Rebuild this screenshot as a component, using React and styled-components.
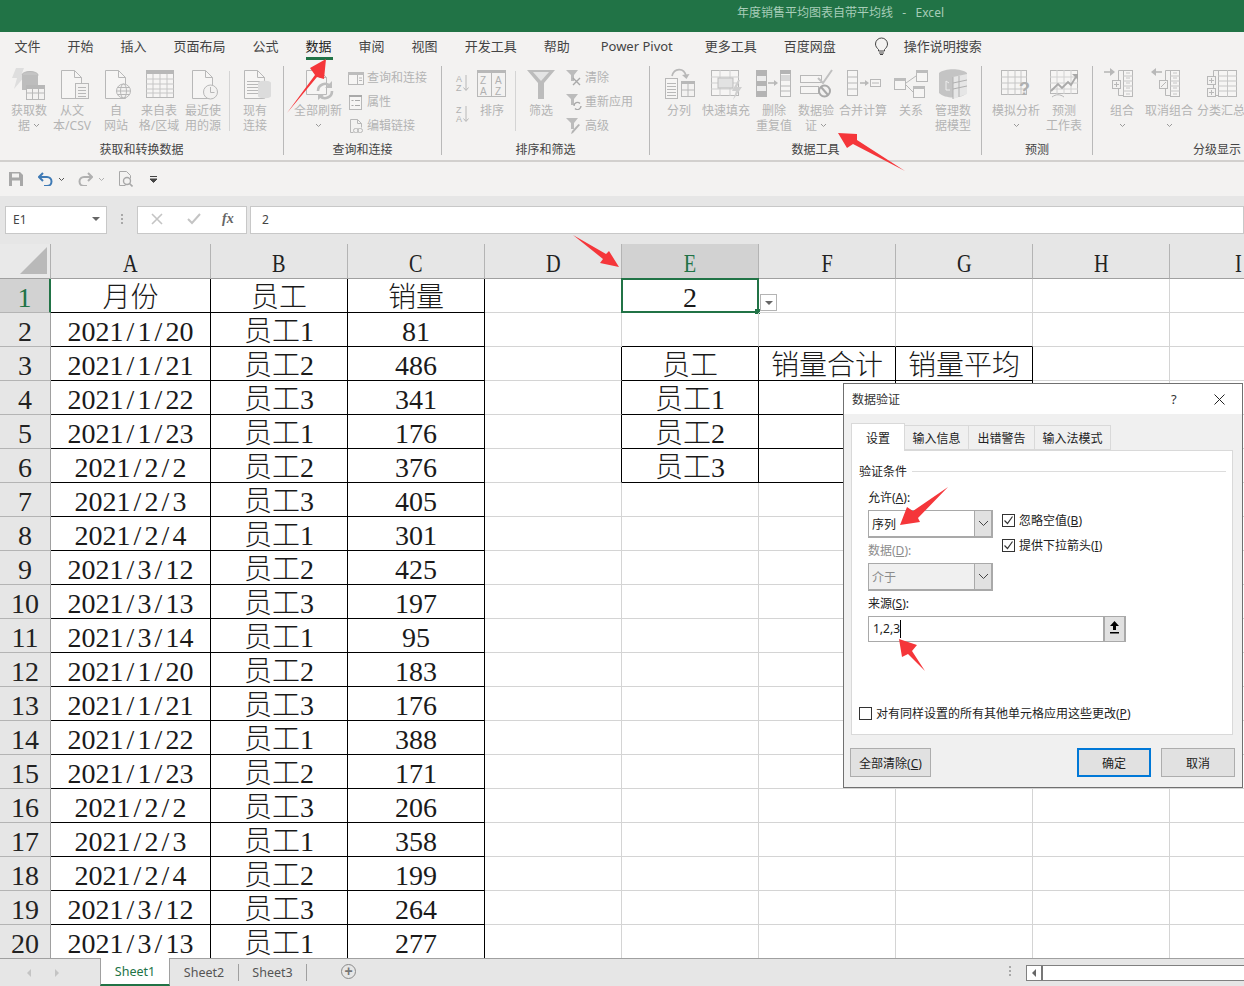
import React from "react";
import styled, { createGlobalStyle } from "styled-components";

const GREEN = "#217346";
const UI_FONT = '"Noto Sans", "Noto Sans CJK SC", sans-serif';
const CELL_FONT = '"Liberation Serif", "Noto Sans CJK SC", serif';

const GlobalStyle = createGlobalStyle`
  html, body { margin: 0; padding: 0; background: #fff; }
  * { box-sizing: border-box; }
`;

const Page = styled.div`
  position: relative;
  width: 1244px;
  height: 986px;
  overflow: hidden;
  font-family: ${UI_FONT};
  font-size: 12px;
  display: flex;
  flex-direction: column;
`;

const TitleBar = styled.div`
  height: 32px;
  flex: none;
  background: ${GREEN};
  color: #a7cdb8;
  font-size: 12px;
  padding-left: 737px;
  line-height: 26px;
  white-space: pre;
`;

const TabRow = styled.div`
  height: 28px;
  flex: none;
  background: #f3f2f1;
  display: flex;
  gap: 27px;
  padding-left: 14.5px;
  color: #444;
  font-size: 13px;
`;

const TabItem = styled.div`
  position: relative;
  line-height: 28px;
  white-space: nowrap;
  color: ${(p) => (p.$active ? "#222" : "#444")};
  margin-left: ${(p) => p.$ml || 0}px;
  &::after {
    content: "";
    display: ${(p) => (p.$active ? "block" : "none")};
    position: absolute;
    left: 0;
    right: -1px;
    bottom: 0;
    height: 3px;
    background: ${GREEN};
  }
`;

const Search = styled.div`
  display: flex;
  align-items: center;
  gap: 15px;
  margin-left: 11px;
  line-height: 28px;
  white-space: nowrap;
`;

const Ribbon = styled.div`
  height: 102px;
  flex: none;
  background: #f3f2f1;
  border-bottom: 2px solid #d2d0ce;
  display: flex;
  padding-bottom: 5px;
`;

const Group = styled.div`
  flex: none;
  width: ${(p) => p.$w}px;
  position: relative;
  display: flex;
  flex-direction: column;
  margin-top: 6px;
  border-right: ${(p) => (p.$last ? "none" : "1px solid #b9b9b9")};
`;

const GroupBody = styled.div`
  flex: 1;
  display: flex;
  align-items: flex-start;
  padding-left: ${(p) => p.$pl || 0}px;
`;

const GroupLabel = styled.div`
  height: 17px;
  line-height: 17px;
  margin-bottom: -3px;
  position: relative;
  text-align: center;
  color: #444;
  white-space: nowrap;
`;

const BigButton = styled.div`
  flex: none;
  width: ${(p) => p.$w}px;
  display: flex;
  flex-direction: column;
  align-items: center;
  color: #b4b4b4;
  line-height: 15px;
  white-space: nowrap;
  & > svg { margin-bottom: 3px; }
`;

const TextLine = styled.div`
  height: 15px;
  display: flex;
  align-items: center;
  gap: 3px;
`;

const InnerSep = styled.div`
  flex: none;
  width: 1px;
  height: 60px;
  margin: 5px ${(p) => p.$mr || 0}px 0 ${(p) => p.$ml || 0}px;
  background: #d4d4d4;
`;

const SmallColumn = styled.div`
  flex: none;
  display: flex;
  flex-direction: column;
  gap: 8px;
  padding-top: 4px;
  margin-left: ${(p) => p.$ml || 0}px;
`;

const SmallItem = styled.div`
  height: 16px;
  display: flex;
  align-items: center;
  gap: 3px;
  color: #b4b4b4;
  line-height: 16px;
  white-space: nowrap;
`;

const SortColumn = styled.div`
  flex: none;
  width: 18px;
  display: flex;
  flex-direction: column;
  gap: 7px;
  padding-top: 5px;
  margin-left: 0;
`;

const RibbonIcon = styled.svg`
  flex: none;
  fill: none;
  stroke: #b8b8b8;
  stroke-width: 1;
  display: block;
  text { stroke: none; fill: #b0b0b0; font-family: "Liberation Sans", sans-serif; font-weight: 400; }
`;

const Big = ({ children }) => (
  <RibbonIcon width="36" height="34" viewBox="0 0 36 34">
    {children}
  </RibbonIcon>
);
const Small = ({ children }) => (
  <RibbonIcon width="16" height="16" viewBox="0 0 16 16">
    {children}
  </RibbonIcon>
);
const Chevron = () => (
  <RibbonIcon width="7" height="5" viewBox="0 0 7 5">
    <path d="M1 1l2.5 2.5L6 1" stroke="#9a9a9a" />
  </RibbonIcon>
);

const Doc = () => (
  <>
    <path d="M7.5 4.5h13l7 7v21h-20z" fill="#f6f5f4" />
    <path d="M20.5 4.5v7h7" />
  </>
);

const Lines = ({ x, y, w, n, gap = 3 }) => (
  <path d={Array.from({ length: n }, (_, i) => `M${x} ${y + i * gap + 0.5}h${w}`).join("")} />
);

const icons = {
  getData: (
    <Big>
      <path d="M5 2h8l-3 8h4L3 23l3-11H1z" fill="#dedede" stroke="none" />
      <ellipse cx="19" cy="9" rx="8" ry="3.5" fill="#c4c4c4" />
      <path d="M11 9v15h16V9" fill="#bdbdbd" stroke="none" />
      <rect x="15.5" y="19.5" width="18" height="14" fill="#f3f2f1" />
      <rect x="15.5" y="19.5" width="18" height="3" fill="#b8b8b8" />
      <path d="M15 27h18M21.5 22v11M27.5 22v11" />
    </Big>
  ),
  text: (
    <Big>
      <Doc />
      <rect x="21.5" y="17.5" width="13" height="15" fill="#f3f2f1" />
      <Lines x={24} y={21} w={8} n={4} />
    </Big>
  ),
  web: (
    <Big>
      <Doc />
      <circle cx="25.5" cy="25" r="7" fill="#f3f2f1" />
      <ellipse cx="25.5" cy="25" rx="3" ry="7" />
      <path d="M18.5 25h14M19.5 21.5h12M19.5 28.5h12" />
    </Big>
  ),
  table: (
    <Big>
      <rect x="5.5" y="4.5" width="27" height="27" fill="#f6f5f4" />
      <rect x="5" y="4" width="28" height="4" fill="#b8b8b8" stroke="none" />
      <path d="M5 13h28M5 18h28M5 23h28M5 27h28M12 8v23M19 8v23M26 8v23" stroke="#c6c6c6" />
    </Big>
  ),
  recent: (
    <Big>
      <Doc />
      <circle cx="25.5" cy="26" r="7" fill="#f3f2f1" />
      <path d="M25.5 21v5.5h4" />
    </Big>
  ),
  existing: (
    <Big>
      <Doc />
      <Lines x={10} y={15} w={13} n={5} />
      <path d="M21 17c0-3 13-3 13 0v13c0 3-13 3-13 0z" fill="#dcdcdc" stroke="none" />
    </Big>
  ),
  refresh: (
    <Big>
      <path d="M6.5 4.5h13l7 7v17h-20z" fill="#f6f5f4" />
      <path d="M19.5 4.5v7h7" />
      <path d="M18 25a7 7 0 0 1 12-5M32 25a7 7 0 0 1-12 5" stroke="#bdbdbd" strokeWidth="2.6" />
      <path d="M32 15v7h-7zM18 34v-6h7z" fill="#bdbdbd" stroke="none" />
    </Big>
  ),
  query: (
    <Small>
      <rect x="0.5" y="2.5" width="15" height="12" fill="#f6f5f4" />
      <rect x="0" y="2" width="16" height="3" fill="#bdbdbd" stroke="none" />
      <path d="M9.5 5v9M11 8h3M11 10.5h3" />
    </Small>
  ),
  props: (
    <Small>
      <rect x="1.5" y="1.5" width="12" height="14" fill="#f6f5f4" />
      <rect x="1" y="1" width="13" height="2" fill="#a9a9a9" stroke="none" />
      <path d="M3.5 6.5h2M7 6.5h5M3.5 11.5h2M7 11.5h5" stroke="#a9a9a9" />
    </Small>
  ),
  links: (
    <Small>
      <path d="M2.5 1.5h7l4 4v4M2.5 1.5v13h3" />
      <path d="M9.5 1.5v4h4" />
      <rect x="5.5" y="10.5" width="5" height="4" rx="2" />
      <rect x="9.5" y="10.5" width="5" height="4" rx="2" />
    </Small>
  ),
  sortAZ: (
    <RibbonIcon width="18" height="24" viewBox="0 0 18 24">
      <text x="3" y="11" fontSize="9">A</text>
      <text x="3" y="20" fontSize="9">Z</text>
      <path d="M13 4v15M10.5 16.5l2.5 3 2.5-3" />
    </RibbonIcon>
  ),
  sortZA: (
    <RibbonIcon width="18" height="24" viewBox="0 0 18 24">
      <text x="3" y="11" fontSize="9">Z</text>
      <text x="3" y="20" fontSize="9">A</text>
      <path d="M13 4v15M10.5 16.5l2.5 3 2.5-3" />
    </RibbonIcon>
  ),
  sort: (
    <Big>
      <rect x="3.5" y="5.5" width="28" height="25" />
      <rect x="3" y="4" width="29" height="3" fill="#b8b8b8" stroke="none" />
      <path d="M17.5 7v24" />
      <text x="6" y="18" fontSize="10">Z</text>
      <text x="21" y="18" fontSize="10">A</text>
      <text x="6" y="29" fontSize="10">A</text>
      <text x="21" y="29" fontSize="10">Z</text>
    </Big>
  ),
  filter: (
    <Big>
      <path d="M4 4h28L21 17v16h-6V17z" fill="#bcbcbc" stroke="none" />
      <path d="M10 6h16l-8 9z" fill="#e4e4e4" stroke="none" />
    </Big>
  ),
  clear: (
    <Small>
      <path d="M0 0h12L8 5v6H5V5z" fill="#bcbcbc" stroke="none" />
      <path d="M7 8l7 7M14 8l-7 7" stroke="#a9a9a9" strokeWidth="1.4" />
    </Small>
  ),
  reapply: (
    <Small>
      <path d="M0 0h12L8 5v6H5V5z" fill="#bcbcbc" stroke="none" />
      <path d="M8 12a3.5 3.5 0 0 1 6-2.5M15 12a3.5 3.5 0 0 1-6 2.5" stroke="#a9a9a9" strokeWidth="1.4" />
    </Small>
  ),
  advanced: (
    <Small>
      <path d="M0 0h12L8 5v6H5V5z" fill="#bcbcbc" stroke="none" />
      <path d="M14 7l-7 8-2 1 1-3 6.5-7z" fill="#b4b4b4" stroke="none" />
    </Small>
  ),
  split: (
    <Big>
      <rect x="4.5" y="12.5" width="12" height="20" fill="#f6f5f4" />
      <Lines x={6} y={17} w={9} n={5} />
      <path d="M11 10C13 2 23 1 25 10" strokeWidth="1.6" />
      <path d="M21 9l4.5 4 3-5z" fill="#b8b8b8" stroke="none" />
      <rect x="20.5" y="15.5" width="13" height="15" fill="#f3f2f1" />
      <rect x="20" y="15" width="14" height="3" fill="#b8b8b8" stroke="none" />
      <path d="M27 18v12M20 24h14" />
    </Big>
  ),
  flash: (
    <Big>
      <rect x="3.5" y="4.5" width="27" height="25" fill="#f6f5f4" />
      <path d="M3 11h28M3 17h28M3 23h28M12 4v26M22 4v26" stroke="#cfcfcf" />
      <rect x="10" y="12" width="15" height="10" fill="#e2e2e2" stroke="#bdbdbd" />
      <path d="M30 14l-6 11h4l-3 9 9-13h-5l3-7z" fill="#cfcfcf" stroke="none" />
    </Big>
  ),
  dedupe: (
    <Big>
      <rect x="0" y="4" width="11" height="27" fill="#b4b4b4" stroke="none" />
      <rect x="1" y="10" width="9" height="5" fill="#ececec" stroke="none" />
      <rect x="1" y="20" width="9" height="5" fill="#ececec" stroke="none" />
      <path d="M12 17h8" strokeWidth="1.6" />
      <path d="M18 14l4 3-4 3z" fill="#b8b8b8" stroke="none" />
      <rect x="24.5" y="4.5" width="10" height="26" fill="#f6f5f4" />
      <rect x="24" y="4" width="11" height="4" fill="#b4b4b4" stroke="none" />
      <path d="M24 14h11M24 20h11M24 25h11" />
      <rect x="25" y="9" width="9" height="5" fill="#d8d8d8" stroke="none" />
    </Big>
  ),
  validate: (
    <Big>
      <rect x="2.5" y="9.5" width="21" height="7" fill="#f6f5f4" />
      <rect x="2.5" y="20.5" width="18" height="7" fill="#f6f5f4" />
      <path d="M20 12l5 5 9-13" strokeWidth="2" stroke="#c0c0c0" />
      <circle cx="26.5" cy="25" r="5.5" fill="#f3f2f1" strokeWidth="2" stroke="#a9a9a9" />
      <path d="M23 21l7 8" strokeWidth="2" stroke="#a9a9a9" />
    </Big>
  ),
  consolidate: (
    <Big>
      <rect x="2.5" y="4.5" width="10" height="25" fill="#f6f5f4" />
      <path d="M2 11h11M2 17h11M2 23h11" />
      <path d="M15 17h7" strokeWidth="1.6" />
      <path d="M20 14l4 3-4 3z" fill="#b8b8b8" stroke="none" />
      <rect x="25.5" y="13.5" width="10" height="7" fill="#f6f5f4" />
      <path d="M27 17h7" />
    </Big>
  ),
  relation: (
    <Big>
      <rect x="1.5" y="12.5" width="11" height="11" fill="#f6f5f4" />
      <rect x="23.5" y="4.5" width="11" height="11" fill="#f6f5f4" />
      <rect x="20.5" y="20.5" width="11" height="11" fill="#f6f5f4" />
      <rect x="1" y="12" width="12" height="3" fill="#bdbdbd" stroke="none" />
      <rect x="23" y="4" width="12" height="3" fill="#bdbdbd" stroke="none" />
      <rect x="20" y="20" width="12" height="3" fill="#bdbdbd" stroke="none" />
      <path d="M13 17l10-7M13 19l7 7" />
    </Big>
  ),
  model: (
    <Big>
      <path d="M4 7c6-5 22-5 28 0v20c-6 6-22 6-28 0z" fill="#c4c4c4" stroke="none" />
      <path d="M18 11l14-3v20l-14 5z" fill="#e6e6e6" stroke="none" />
      <path d="M18 11v22M24 10v21M18 17l14-3M18 23l14-3" stroke="#b0b0b0" />
      <path d="M11 15v9h4M11 15l3 2" stroke="#ededed" />
    </Big>
  ),
  whatIf: (
    <Big>
      <rect x="3.5" y="4.5" width="25" height="24" fill="#f6f5f4" />
      <path d="M3 11h26M3 17h26M3 23h26M10 4v25M17 4v25M23 4v25" stroke="#c6c6c6" />
      <text x="21" y="29" fontSize="18" style={{ fontWeight: 700 }}>?</text>
    </Big>
  ),
  forecast: (
    <Big>
      <rect x="4.5" y="4.5" width="27" height="23" fill="#f6f5f4" />
      <path d="M4 11h28M4 17h28M4 23h28M11 4v24M18 4v24M25 4v24" stroke="#d2d2d2" />
      <path d="M5 25l7-7 4 4 6-6 3 3 6-10" strokeWidth="1.8" stroke="#a9a9a9" />
      <path d="M26 8h6v6z" fill="#a9a9a9" stroke="none" />
      <path d="M6 31c4-3 8-3 12 0" />
    </Big>
  ),
  group: (
    <Big>
      <path d="M0 6h8" strokeWidth="1.6" />
      <path d="M6 2l5 4-5 4z" fill="#b8b8b8" stroke="none" />
      <path d="M19.5 4.5h-5v25h5" />
      <rect x="19.5" y="4.5" width="9" height="26" fill="#f6f5f4" />
      <path d="M19 10h10M19 15h10M19 20h10M19 25h10M22 7h4M22 12h4M22 17h4M22 22h4M22 28h4" stroke="#c6c6c6" />
      <rect x="8.5" y="14.5" width="8" height="8" fill="#f3f2f1" />
      <path d="M12.5 16v5M10 18.5h5" />
    </Big>
  ),
  ungroup: (
    <Big>
      <path d="M3 6h8" strokeWidth="1.6" />
      <path d="M5 2L0 6l5 4z" fill="#b8b8b8" stroke="none" />
      <path d="M19.5 4.5h-5v25h5" />
      <rect x="19.5" y="4.5" width="9" height="26" fill="#f6f5f4" />
      <path d="M19 10h10M19 15h10M19 20h10M19 25h10M22 7h4M22 12h4M22 17h4M22 22h4M22 28h4" stroke="#c6c6c6" />
      <rect x="8.5" y="14.5" width="8" height="8" fill="#f3f2f1" />
      <path d="M10 21l5-5" />
    </Big>
  ),
  subtotal: (
    <Big>
      <path d="M15.5 4.5h-5v25h5" />
      <rect x="15.5" y="4.5" width="18" height="26" fill="#f6f5f4" />
      <path d="M15 10h19M15 15h19M15 20h19M15 25h19M24.5 4v27" stroke="#c6c6c6" />
      <rect x="4.5" y="10.5" width="8" height="8" fill="#f3f2f1" />
      <path d="M8.5 12v5M6 14.5h5" />
      <rect x="4.5" y="22.5" width="8" height="8" fill="#f3f2f1" />
      <path d="M8.5 24v5M6 26.5h5" />
    </Big>
  ),
};

const Btn = ({ w, icon, lines, chevron }) => (
  <BigButton $w={w}>
    {icons[icon]}
    {lines.map((t, i) => (
      <TextLine key={i}>
        {t}
        {chevron && lines.length > 1 && i === lines.length - 1 && <Chevron />}
      </TextLine>
    ))}
    {chevron && lines.length === 1 && (
      <TextLine>
        <Chevron />
      </TextLine>
    )}
  </BigButton>
);

const Item = ({ icon, text }) => (
  <SmallItem>
    {icons[icon]}
    {text}
  </SmallItem>
);

const RibbonBar = () => (
  <Ribbon>
    <Group $w={284}>
      <GroupBody $pl={5}>
        <Btn w={48} icon="getData" lines={["获取数", "据"]} chevron />
        <Btn w={38} icon="text" lines={["从文", "本/CSV"]} />
        <Btn w={50} icon="web" lines={["自", "网站"]} />
        <Btn w={36} icon="table" lines={["来自表", "格/区域"]} />
        <Btn w={52} icon="recent" lines={["最近使", "用的源"]} />
        <InnerSep />
        <Btn w={50} icon="existing" lines={["现有", "连接"]} />
      </GroupBody>
      <GroupLabel>获取和转换数据</GroupLabel>
    </Group>
    <Group $w={158}>
      <GroupBody $pl={8}>
        <Btn w={52} icon="refresh" lines={["全部刷新"]} chevron />
        <SmallColumn $ml={4}>
          <Item icon="query" text="查询和连接" />
          <Item icon="props" text="属性" />
          <Item icon="links" text="编辑链接" />
        </SmallColumn>
      </GroupBody>
      <GroupLabel>查询和连接</GroupLabel>
    </Group>
    <Group $w={208}>
      <GroupBody $pl={11}>
        <SortColumn>
          {icons.sortAZ}
          {icons.sortZA}
        </SortColumn>
        <Btn w={42} icon="sort" lines={["排序"]} />
        <InnerSep $ml={2} $mr={4} />
        <Btn w={42} icon="filter" lines={["筛选"]} />
        <SmallColumn $ml={4}>
          <Item icon="clear" text="清除" />
          <Item icon="reapply" text="重新应用" />
          <Item icon="advanced" text="高级" />
        </SmallColumn>
      </GroupBody>
      <GroupLabel>排序和筛选</GroupLabel>
    </Group>
    <Group $w={332}>
      <GroupBody $pl={10}>
        <Btn w={38} icon="split" lines={["分列"]} />
        <Btn w={56} icon="flash" lines={["快速填充"]} />
        <Btn w={40} icon="dedupe" lines={["删除", "重复值"]} />
        <Btn w={44} icon="validate" lines={["数据验", "证"]} chevron />
        <Btn w={50} icon="consolidate" lines={["合并计算"]} />
        <Btn w={46} icon="relation" lines={["关系"]} />
        <Btn w={38} icon="model" lines={["管理数", "据模型"]} />
      </GroupBody>
      <GroupLabel>数据工具</GroupLabel>
    </Group>
    <Group $w={111}>
      <GroupBody $pl={8}>
        <Btn w={52} icon="whatIf" lines={["模拟分析"]} chevron />
        <Btn w={44} icon="forecast" lines={["预测", "工作表"]} />
      </GroupBody>
      <GroupLabel>预测</GroupLabel>
    </Group>
    <Group $w={248} $last>
      <GroupBody $pl={7}>
        <Btn w={44} icon="group" lines={["组合"]} chevron />
        <Btn w={50} icon="ungroup" lines={["取消组合"]} chevron />
        <Btn w={54} icon="subtotal" lines={["分类汇总"]} />
      </GroupBody>
      <GroupLabel>分级显示</GroupLabel>
    </Group>
  </Ribbon>
);

const QuickBar = styled.div`
  height: 34px;
  flex: none;
  background: #f3f2f1;
  display: flex;
  align-items: center;
  padding-left: 9px;
`;

const QuickIcon = styled.svg`
  flex: none;
  fill: none;
  margin-left: ${(p) => p.$ml || 0}px;
`;

const FormulaArea = styled.div`
  height: 48px;
  flex: none;
  background: #e6e6e6;
  display: flex;
  padding: 10px 0 10px 5px;
`;

const FieldBox = styled.div`
  height: 28px;
  background: #fff;
  border: 1px solid #c8c8c8;
  flex: ${(p) => (p.$grow ? 1 : "none")};
  width: ${(p) => (p.$w ? `${p.$w}px` : "auto")};
  display: flex;
  align-items: center;
  color: #444;
  font-size: 12px;
  padding-left: ${(p) => p.$pl || 0}px;
  padding-bottom: 2px;
  margin-left: ${(p) => p.$ml || 0}px;
  position: relative;
`;

const NameArrow = styled.span`
  margin-left: auto;
  margin-right: 6px;
  width: 0;
  height: 0;
  border-left: 4px solid transparent;
  border-right: 4px solid transparent;
  border-top: 4px solid #666;
`;

const Grip = styled.div`
  flex: none;
  width: 2px;
  height: 12px;
  margin: 8px 0 0 14px;
  background: repeating-linear-gradient(#a8a8a8 0 2px, transparent 2px 4px);
`;

const FxLabel = styled.span`
  font-family: "Liberation Serif", serif;
  font-style: italic;
  font-weight: 700;
  font-size: 14px;
  color: #666;
  margin-left: 21px;
`;

const Sheet = styled.div`
  height: 714px;
  flex: none;
  overflow: hidden;
  display: grid;
  grid-template-columns: 51px 160px repeat(8, 137px);
  grid-auto-rows: 34px;
  grid-template-rows: 35px;
  background: #fff;
`;

const Corner = styled.div`
  background: #e9e9e9;
  border-right: 1px solid #b0b0b0;
  border-bottom: 1px solid #a0a0a0;
  display: flex;
  align-items: center;
  justify-content: flex-end;
  padding-right: 2px;
`;

const ColHead = styled.div`
  background: ${(p) => (p.$selected ? "#d2d2d2" : "#e6e6e6")};
  color: ${(p) => (p.$selected ? GREEN : "#222")};
  border-right: 1px solid #b4b4b4;
  border-bottom: 1px solid #a0a0a0;
  font-family: ${CELL_FONT};
  font-size: 26px;
  line-height: 30px;
  padding-top: 5px;
  display: flex;
  align-items: center;
  justify-content: center;
  span { display: block; transform: scaleX(0.78); }
`;

const RowHead = styled.div`
  background: ${(p) => (p.$selected ? "#d2d2d2" : "#e6e6e6")};
  color: ${(p) => (p.$selected ? GREEN : "#222")};
  border-right: ${(p) => (p.$selected ? `2px solid ${GREEN}` : "1px solid #a0a0a0")};
  border-bottom: 1px solid #b4b4b4;
  font-family: ${CELL_FONT};
  font-size: 28px;
  line-height: 30px;
  padding-top: 5px;
  display: flex;
  align-items: center;
  justify-content: center;
`;

const Cell = styled.div`
  position: relative;
  border-right: 1px solid ${(p) => (p.$blackRight ? "#000" : "#d4d4d4")};
  border-bottom: 1px solid ${(p) => (p.$blackBottom ? "#000" : "#d4d4d4")};
  font-family: ${CELL_FONT};
  font-size: 28px;
  font-weight: 300;
  line-height: 30px;
  padding-top: 5px;
  color: #1a1a1a;
  display: flex;
  align-items: center;
  justify-content: center;
  white-space: nowrap;
`;

const CellText = styled.span`
  display: block;
  line-height: 30px;
  height: 30px;
`;

const Slash = styled.span`
  display: inline-block;
  width: 14px;
  text-align: center;
`;

const Selection = styled.div`
  position: absolute;
  left: -1px;
  top: -1px;
  right: -1px;
  bottom: -1px;
  border: 2px solid ${GREEN};
`;

const FillHandle = styled.div`
  position: absolute;
  right: -2px;
  bottom: -2px;
  width: 5px;
  height: 5px;
  background: ${GREEN};
`;

const CellDrop = styled.div`
  position: absolute;
  left: 138px;
  top: 15px;
  width: 17px;
  height: 17px;
  background: #fff;
  border: 1px solid #b4b4b4;
  display: flex;
  align-items: center;
  justify-content: center;
  &::after {
    content: "";
    border-left: 4px solid transparent;
    border-right: 4px solid transparent;
    border-top: 4px solid #666;
  }
`;

const TabBar = styled.div`
  height: 28px;
  flex: none;
  background: #e6e6e6;
  border-top: 1px solid #a0a0a0;
  display: flex;
  align-items: stretch;
  color: #555;
  font-size: 12.5px;
`;

const Nav = styled.div`
  flex: none;
  width: 100px;
  display: flex;
  align-items: center;
  gap: 24px;
  padding-left: 27px;
`;

const NavArrow = styled.span`
  border-top: 4px solid transparent;
  border-bottom: 4px solid transparent;
  ${(p) => (p.$left ? "border-right" : "border-left")}: 4px solid #c4c4c4;
`;

const SheetTab = styled.div`
  flex: none;
  width: ${(p) => p.$w}px;
  display: flex;
  align-items: center;
  justify-content: center;
  ${(p) =>
    p.$active
      ? `background:#fff;color:${GREEN};border-left:1px solid #a0a0a0;border-right:1px solid #a0a0a0;border-bottom:2px solid ${GREEN};margin-top:-1px;`
      : "margin:5px 0 5px;border-right:1px solid #a0a0a0;"}
`;

const AddSheet = styled.div`
  flex: none;
  width: 15px;
  height: 15px;
  margin: 5px 0 0 34px;
  border: 1px solid #8a8a8a;
  border-radius: 50%;
  color: #777;
  display: flex;
  align-items: center;
  justify-content: center;
  &::before {
    content: "+";
    font-family: "Liberation Sans", sans-serif;
    font-size: 14px;
    font-weight: 700;
    line-height: 13px;
  }
`;

const StatusDots = styled.div`
  flex: none;
  width: 2px;
  height: 12px;
  margin: 7px 0 0 653px;
  background: repeating-linear-gradient(#a8a8a8 0 2px, transparent 2px 4px);
`;

const HScroll = styled.div`
  flex: none;
  width: 230px;
  height: 16px;
  margin: 6px 0 0 15px;
  background: #fff;
  border: 1px solid #808080;
  border-right: none;
  display: flex;
  align-items: center;
`;

const HScrollBtn = styled.div`
  width: 16px;
  height: 100%;
  border-right: 2px solid #777;
  display: flex;
  align-items: center;
  justify-content: center;
  &::after {
    content: "";
    border-top: 4px solid transparent;
    border-bottom: 4px solid transparent;
    border-right: 4px solid #666;
  }
`;

/* dialog */
const Dialog = styled.div`
  position: absolute;
  left: 843px;
  top: 383px;
  width: 400px;
  height: 405px;
  background: #f0f0f0;
  border: 1px solid #707070;
  display: flex;
  flex-direction: column;
  color: #222;
  font-size: 12px;
`;

const DialogTitle = styled.div`
  height: 30px;
  flex: none;
  background: #fff;
  display: flex;
  align-items: center;
  padding-left: 8px;
  color: #333;
`;

const TitleBtn = styled.div`
  margin-left: ${(p) => p.$ml}px;
  font-size: 13px;
  display: flex;
`;

const DialogTabs = styled.div`
  display: flex;
  align-items: flex-end;
  height: 27px;
  margin: 9px 0 0 7px;
  flex: none;
`;

const DialogTab = styled.div`
  width: ${(p) => p.$w}px;
  height: ${(p) => (p.$active ? 28 : 25)}px;
  margin-bottom: ${(p) => (p.$active ? -1 : 0)}px;
  background: ${(p) => (p.$active ? "#fff" : "#f0f0f0")};
  border: 1px solid #d9d9d9;
  border-left: ${(p) => (p.$active ? "1px solid #d9d9d9" : "none")};
  border-bottom: ${(p) => (p.$active ? "none" : "1px solid #d9d9d9")};
  display: flex;
  align-items: center;
  justify-content: center;
  position: relative;
  z-index: ${(p) => (p.$active ? 1 : 0)};
`;

const TabPanel = styled.div`
  height: 285px;
  flex: none;
  margin: 0 9px 0 7px;
  background: #fff;
  border: 1px solid #d9d9d9;
  display: flex;
  flex-direction: column;
  padding: 11px 6px 14px 7px;
`;

const Legend = styled.div`
  height: 18px;
  flex: none;
  display: flex;
  align-items: center;
  gap: 5px;
  margin-bottom: 5px;
  &::after {
    content: "";
    flex: 1;
    height: 1px;
    background: #dcdcdc;
  }
`;

const FieldRow = styled.div`
  display: flex;
  padding-left: 9px;
`;

const FieldColumn = styled.div`
  flex: none;
  width: 125px;
`;

const CheckColumn = styled.div`
  margin: 28px 0 0 9px;
  display: flex;
  flex-direction: column;
  gap: 11px;
`;

const FieldLabel = styled.div`
  height: 18px;
  line-height: 20px;
  margin: 3px 0 4px;
  color: ${(p) => (p.$disabled ? "#8c8c8c" : "#222")};
  white-space: nowrap;
`;

const Combo = styled.div`
  height: 28px;
  display: flex;
  background: ${(p) => (p.$disabled ? "#f0f0f0" : "#fff")};
  border: 1px solid #a9a9a9;
  border-bottom-width: 2px;
  border-right-width: 2px;
  color: ${(p) => (p.$disabled ? "#8c8c8c" : "#222")};
  align-items: center;
  padding-left: 3px;
`;

const ComboBtn = styled.div`
  margin-left: auto;
  width: 17px;
  height: 100%;
  background: #e1e1e1;
  border-left: 1px solid #a9a9a9;
  display: flex;
  align-items: center;
  justify-content: center;
`;

const SourceInput = styled.div`
  width: 258px;
  margin-left: 9px;
  height: 26px;
  display: flex;
  align-items: center;
  background: #fff;
  border: 1px solid #a9a9a9;
  border-right-width: 2px;
  padding-left: 4px;
`;

const SourceText = styled.span`
  position: relative;
  top: -1px;
`;

const Caret = styled.span`
  width: 1px;
  height: 18px;
  background: #000;
`;

const RefBtn = styled.div`
  margin-left: auto;
  width: 21px;
  height: 100%;
  background: #e1e1e1;
  border-left: 2px solid #a9a9a9;
  display: flex;
  align-items: flex-start;
  justify-content: center;
  padding-top: 3px;
`;

const CheckRow = styled.div`
  display: flex;
  align-items: center;
  gap: 4px;
  height: 14px;
  white-space: nowrap;
  margin-top: ${(p) => (p.$bottom ? "auto" : 0)};
`;

const CheckBox = styled.span`
  flex: none;
  width: 13px;
  height: 13px;
  background: #fff;
  border: 1px solid #333;
  display: flex;
  align-items: center;
  justify-content: center;
`;

const DialogFooter = styled.div`
  display: flex;
  margin: 13px 7px 0 6px;
`;

const DialogBtn = styled.div`
  flex: none;
  width: ${(p) => p.$w}px;
  height: 29px;
  margin-left: ${(p) => p.$ml || 0}px;
  background: #e1e1e1;
  border: ${(p) => (p.$primary ? "2px solid #0078d7" : "1px solid #adadad")};
  display: flex;
  align-items: center;
  justify-content: center;
`;

const Annotations = styled.svg`
  position: absolute;
  left: 0;
  top: 0;
  pointer-events: none;
`;

const rows = [
  ["2021/1/20", "员工1", 81],
  ["2021/1/21", "员工2", 486],
  ["2021/1/22", "员工3", 341],
  ["2021/1/23", "员工1", 176],
  ["2021/2/2", "员工2", 376],
  ["2021/2/3", "员工3", 405],
  ["2021/2/4", "员工1", 301],
  ["2021/3/12", "员工2", 425],
  ["2021/3/13", "员工3", 197],
  ["2021/3/14", "员工1", 95],
  ["2021/1/20", "员工2", 183],
  ["2021/1/21", "员工3", 176],
  ["2021/1/22", "员工1", 388],
  ["2021/1/23", "员工2", 171],
  ["2021/2/2", "员工3", 206],
  ["2021/2/3", "员工1", 358],
  ["2021/2/4", "员工2", 199],
  ["2021/3/12", "员工3", 264],
  ["2021/3/13", "员工1", 277],
];

const COLS = ["A", "B", "C", "D", "E", "F", "G", "H", "I"];

const sideTable = {
  "3-4": "员工",
  "3-5": "销量合计",
  "3-6": "销量平均",
  "4-4": "员工1",
  "5-4": "员工2",
  "6-4": "员工3",
};

const cellValue = (r, c) => {
  if (r === 1) return ["月份", "员工", "销量", null, "2"][c] ?? null;
  if (c <= 2) return rows[r - 2][c];
  return sideTable[`${r}-${c}`] ?? null;
};

const DateText = ({ value }) =>
  value.split("/").map((part, i) => (
    <React.Fragment key={i}>
      {i > 0 && <Slash>/</Slash>}
      {part}
    </React.Fragment>
  ));

const inSide = (r, c) => r >= 3 && r <= 6 && c >= 4 && c <= 6;

const SheetGrid = () => (
  <Sheet>
    <Corner>
      <svg width="28" height="28" viewBox="0 0 28 28">
        <path d="M27 0v27H0z" fill="#b9b9b9" />
      </svg>
    </Corner>
    {COLS.map((name) => (
      <ColHead key={name} $selected={name === "E"}>
        <span>{name}</span>
      </ColHead>
    ))}
    {Array.from({ length: 20 }, (_, i) => i + 1).map((r) => (
      <React.Fragment key={r}>
        <RowHead $selected={r === 1}>{r}</RowHead>
        {COLS.map((name, c) => {
          const value = cellValue(r, c);
          return (
            <Cell
              key={name}
              $blackRight={c <= 2 || inSide(r, c) || inSide(r, c + 1)}
              $blackBottom={c <= 2 || inSide(r, c) || inSide(r + 1, c)}
            >
              {value !== null && (
                <CellText>{r > 1 && c === 0 ? <DateText value={value} /> : value}</CellText>
              )}
              {r === 1 && c === 4 && (
                <>
                  <Selection />
                  <CellDrop />
                  <FillHandle />
                </>
              )}
            </Cell>
          );
        })}
      </React.Fragment>
    ))}
  </Sheet>
);

const SmallChevron = () => (
  <svg width="11" height="7" viewBox="0 0 11 7" fill="none">
    <path d="M1 1l4.5 4.5L10 1" stroke="#444" />
  </svg>
);

const Tick = () => (
  <svg width="11" height="11" viewBox="0 0 11 11" fill="none">
    <path d="M1.5 5.5l3 3 5-7" stroke="#333" strokeWidth="1.2" />
  </svg>
);

const ValidationDialog = () => (
  <Dialog>
    <DialogTitle>
      数据验证
      <TitleBtn $ml={271}>?</TitleBtn>
      <TitleBtn $ml={37}>
        <svg width="11" height="11" viewBox="0 0 11 11" fill="none">
          <path d="M0.5 0.5l10 10M10.5 0.5l-10 10" stroke="#222" />
        </svg>
      </TitleBtn>
    </DialogTitle>
    <DialogTabs>
      <DialogTab $active $w={54}>设置</DialogTab>
      <DialogTab $w={64}>输入信息</DialogTab>
      <DialogTab $w={66}>出错警告</DialogTab>
      <DialogTab $w={76}>输入法模式</DialogTab>
    </DialogTabs>
    <TabPanel>
      <Legend>验证条件</Legend>
      <FieldRow>
        <FieldColumn>
          <FieldLabel>允许(<u>A</u>):</FieldLabel>
          <Combo>
            序列
            <ComboBtn><SmallChevron /></ComboBtn>
          </Combo>
          <FieldLabel $disabled>数据(<u>D</u>):</FieldLabel>
          <Combo $disabled>
            介于
            <ComboBtn><SmallChevron /></ComboBtn>
          </Combo>
          <FieldLabel>来源(<u>S</u>):</FieldLabel>
        </FieldColumn>
        <CheckColumn>
          <CheckRow><CheckBox><Tick /></CheckBox><span>忽略空值(<u>B</u>)</span></CheckRow>
          <CheckRow><CheckBox><Tick /></CheckBox><span>提供下拉箭头(<u>I</u>)</span></CheckRow>
        </CheckColumn>
      </FieldRow>
      <SourceInput>
        <SourceText>1,2,3</SourceText><Caret />
        <RefBtn>
          <svg width="11" height="14" viewBox="0 0 11 14">
            <path d="M5.5 1L10 6H7v4H4V6H1zM1 12h9v1.5H1z" fill="#000" />
          </svg>
        </RefBtn>
      </SourceInput>
      <CheckRow $bottom>
        <CheckBox />
        <span>对有同样设置的所有其他单元格应用这些更改(<u>P</u>)</span>
      </CheckRow>
    </TabPanel>
    <DialogFooter>
      <DialogBtn $w={81}><span>全部清除(<u>C</u>)</span></DialogBtn>
      <DialogBtn $w={74} $ml={146} $primary>确定</DialogBtn>
      <DialogBtn $w={74} $ml={10}>取消</DialogBtn>
    </DialogFooter>
  </Dialog>
);

const arrows = [
  "287,113 315,75 310,68 326,59 324,79 317,77",
  "905,171 857,140 857,134 838,133 847,148 853,144",
  "573,235 606,254 609,251 619,267 600,263 603,259",
  "948,487 918,518 920,522 900,525 907,507 913,511",
  "899,639 917,645 912,651 925,671 908,654 902,657",
];

export default function App() {
  return (
    <Page>
      <GlobalStyle />
      <TitleBar>年度销售平均图表自带平均线   -   Excel</TitleBar>
      <TabRow>
        <TabItem>文件</TabItem>
        <TabItem>开始</TabItem>
        <TabItem>插入</TabItem>
        <TabItem>页面布局</TabItem>
        <TabItem>公式</TabItem>
        <TabItem $active>数据</TabItem>
        <TabItem>审阅</TabItem>
        <TabItem>视图</TabItem>
        <TabItem>开发工具</TabItem>
        <TabItem>帮助</TabItem>
        <TabItem $ml={4}>Power Pivot</TabItem>
        <TabItem $ml={5}>更多工具</TabItem>
        <TabItem>百度网盘</TabItem>
        <Search>
          <svg width="15" height="18" viewBox="0 0 15 18" fill="none">
            <path d="M4.5 12.5C3 11 1.5 9.5 1.5 7a6 6 0 0 1 12 0c0 2.5-1.5 4-3 5.5v1.5h-6zM5 16h5M6 17.5h3" stroke="#444" />
          </svg>
          操作说明搜索
        </Search>
      </TabRow>
      <RibbonBar />
      <QuickBar>
        <QuickIcon width="14" height="14" viewBox="0 0 14 14">
          <path d="M0 0h11l3 3v11H0z" fill="#a8a8a8" />
          <path d="M3 1.5h7v4H3z" fill="#f3f2f1" />
          <path d="M3 8.5h8V14H3z" fill="#f3f2f1" />
        </QuickIcon>
        <QuickIcon $ml={15} width="15" height="14" viewBox="0 0 15 14">
          <path d="M5 1L1 5l4 4" stroke="#3f7ab5" strokeWidth="2" />
          <path d="M2 5h7a4.5 4.5 0 0 1 0 9H6" stroke="#3f7ab5" strokeWidth="2" />
        </QuickIcon>
        <QuickIcon $ml={5} width="7" height="5" viewBox="0 0 7 5">
          <path d="M1 1l2.5 2.5L6 1" stroke="#555" />
        </QuickIcon>
        <QuickIcon $ml={13} width="15" height="14" viewBox="0 0 15 14">
          <path d="M10 1l4 4-4 4" stroke="#b0b0b0" strokeWidth="2" />
          <path d="M13 5H6a4.5 4.5 0 0 0 0 9h3" stroke="#b0b0b0" strokeWidth="2" />
        </QuickIcon>
        <QuickIcon $ml={5} width="7" height="5" viewBox="0 0 7 5">
          <path d="M1 1l2.5 2.5L6 1" stroke="#b0b0b0" />
        </QuickIcon>
        <QuickIcon $ml={14} width="14" height="16" viewBox="0 0 14 16">
          <path d="M0.5 0.5h7l4 4v3M0.5 0.5v14h6" stroke="#a8a8a8" />
          <circle cx="8" cy="10" r="3.5" stroke="#a8a8a8" strokeWidth="1.4" />
          <path d="M10.5 12.5l3 3" stroke="#a8a8a8" strokeWidth="1.6" />
        </QuickIcon>
        <QuickIcon $ml={17} width="7" height="8" viewBox="0 0 7 8">
          <path d="M0 1.5h7M0 4l3.5 3.5L7 4z" stroke="#444" fill="#444" />
        </QuickIcon>
      </QuickBar>
      <FormulaArea>
        <FieldBox $w={102} $pl={7}>
          E1
          <NameArrow />
        </FieldBox>
        <Grip />
        <FieldBox $w={110} $ml={14} $pl={13}>
          <svg width="12" height="12" viewBox="0 0 12 12" fill="none">
            <path d="M1 1l10 10M11 1L1 11" stroke="#c4c4c4" strokeWidth="1.6" />
          </svg>
          <svg style={{ marginLeft: 24 }} width="14" height="12" viewBox="0 0 14 12" fill="none">
            <path d="M1 6l4 4 8-9" stroke="#c4c4c4" strokeWidth="2" />
          </svg>
          <FxLabel>fx</FxLabel>
        </FieldBox>
        <FieldBox $grow $ml={3} $pl={11}>2</FieldBox>
      </FormulaArea>
      <SheetGrid />
      <TabBar>
        <Nav>
          <NavArrow $left />
          <NavArrow />
        </Nav>
        <SheetTab $active $w={70}>Sheet1</SheetTab>
        <SheetTab $w={69}>Sheet2</SheetTab>
        <SheetTab $w={68}>Sheet3</SheetTab>
        <AddSheet />
        <StatusDots />
        <HScroll>
          <HScrollBtn />
        </HScroll>
      </TabBar>
      <ValidationDialog />
      <Annotations width="1244" height="986" viewBox="0 0 1244 986">
        {arrows.map((points) => (
          <polygon key={points} points={points} fill="#f5363a" />
        ))}
      </Annotations>
    </Page>
  );
}
